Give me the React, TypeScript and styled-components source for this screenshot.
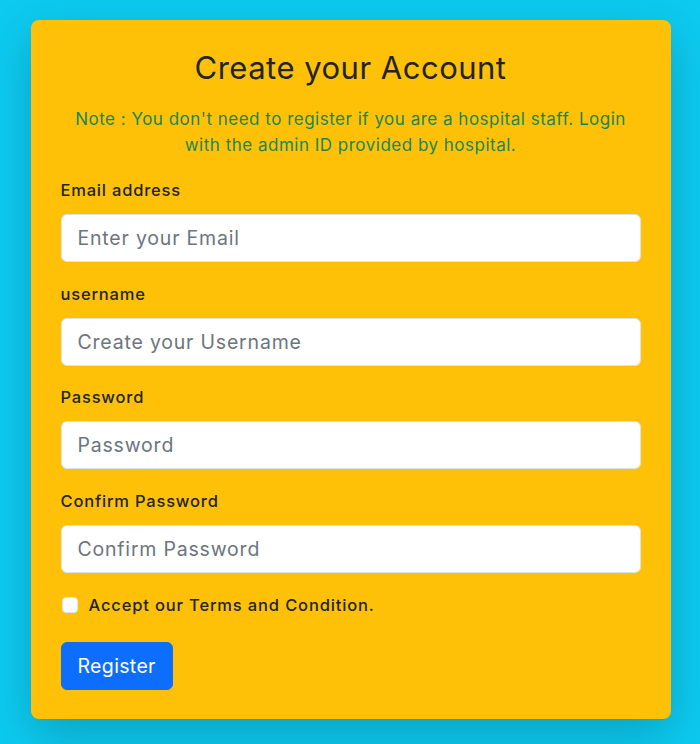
import React from 'react';
import styled, { createGlobalStyle } from 'styled-components';

const GlobalStyle = createGlobalStyle`
  html, body {
    margin: 0;
    padding: 0;
    background: #0dcaf0;
  }

  body {
    font-family: Inter, 'DejaVu Sans', sans-serif;
    color: #212529;
  }

  * {
    box-sizing: border-box;
  }
`;

const Page = styled.div`
  min-height: 744px;
  padding: 20px 0 0 1px;
  background: #0dcaf0;
`;

const Card = styled.form`
  display: flex;
  flex-direction: column;

  width: 640px;
  margin: 0 auto;
  padding: 30px 30px 29px;

  background: #ffc107;
  border-radius: 8px;
  box-shadow: 0 16px 48px rgba(0, 0, 0, 0.2);
`;

const Title = styled.h2`
  margin: 0 0 20px;

  font-size: 31px;
  font-weight: 400;
  letter-spacing: 0.5px;
  line-height: 36px;
  text-align: center;
  color: #212529;
`;

const Note = styled.p`
  margin: 0 0 20px;
  padding: 0 12px;

  font-size: 17px;
  font-weight: 400;
  letter-spacing: 0.5px;
  line-height: 26px;
  text-align: center;
  color: #198754;
`;

const Field = styled.div`
  display: flex;
  flex-direction: column;

  margin-bottom: 19.5px;

  &:last-of-type {
    margin-bottom: 20.5px;
  }
`;

const Label = styled.label`
  margin-bottom: 12px;

  font-size: 16.5px;
  font-weight: 500;
  letter-spacing: 0.8px;
  line-height: 24px;
  color: #212529;
`;

const Input = styled.input`
  width: 100%;
  height: 48px;
  padding: 0 16px;

  font-family: inherit;
  font-size: 19.5px;
  letter-spacing: 0.8px;
  color: #212529;

  background: #fff;
  border: 1px solid #dee2e6;
  border-radius: 6px;

  &::placeholder {
    color: #6c757d;
  }
`;

const CheckRow = styled.label`
  display: flex;
  align-items: center;
  gap: 11px;

  margin-bottom: 25px;

  font-size: 16.5px;
  font-weight: 500;
  letter-spacing: 0.85px;
  line-height: 24px;
  color: #212529;
`;

const Check = styled.input`
  appearance: none;
  width: 16px;
  height: 16px;
  margin: 0 0 0 1px;

  background: #fff;
  border: 1px solid #dee2e6;
  border-radius: 4px;
`;

const Button = styled.button`
  align-self: flex-start;

  height: 48px;
  padding: 0 16px;

  font-family: inherit;
  font-size: 19.5px;
  letter-spacing: 0.35px;
  color: #fff;

  background: #0d6efd;
  border: 1px solid #0d6efd;
  border-radius: 6px;
  cursor: pointer;
`;

const fields = [
  { id: 'email', label: 'Email address', placeholder: 'Enter your Email', type: 'email' },
  { id: 'username', label: 'username', placeholder: 'Create your Username', type: 'text' },
  { id: 'password', label: 'Password', placeholder: 'Password', type: 'password' },
  { id: 'confirm', label: 'Confirm Password', placeholder: 'Confirm Password', type: 'password' },
];

const App = () => {
  return (
    <Page>
      <GlobalStyle />
      <Card onSubmit={(e) => e.preventDefault()}>
        <Title>Create your Account</Title>
        <Note>
          Note : You don't need to register if you are a hospital staff. Login with the admin ID provided by hospital.
        </Note>
        {fields.map((f) => (
          <Field key={f.id}>
            <Label htmlFor={f.id}>{f.label}</Label>
            <Input id={f.id} type={f.type} placeholder={f.placeholder} />
          </Field>
        ))}
        <CheckRow>
          <Check type="checkbox" />
          Accept our Terms and Condition.
        </CheckRow>
        <Button type="submit">Register</Button>
      </Card>
    </Page>
  );
};

export default App;
